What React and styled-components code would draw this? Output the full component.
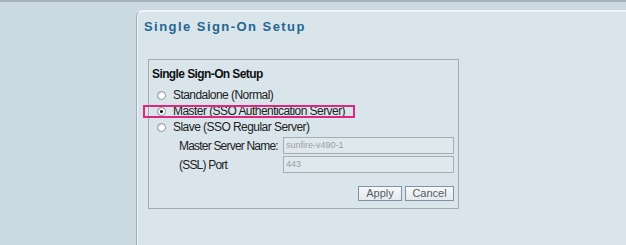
import React from "react";
import styled, { createGlobalStyle } from "styled-components";

const Global = createGlobalStyle`
  html, body { margin: 0; padding: 0; }
  body { font-family: "Liberation Sans", Arial, sans-serif; background: #cbdae2; }
`;

const Page = styled.div`
  display: flex;
  width: 626px;
  height: 245px;
  box-sizing: border-box;
  border-top: 2px solid #a9b2b7;
  background: #cbdae2;
  overflow: hidden;
`;

const Sidebar = styled.div`
  width: 136px;
  flex: none;
`;

const Panel = styled.div`
  flex: 1;
  margin-top: 8px;
  border-top: 1px solid #eef3f6;
  border-left: 1px solid #a3afb5;
  border-top-left-radius: 7px;
  background: #d9e5eb;
  padding: 8px 0 0 7px;
  box-shadow: inset 1px 1px 0 #eef4f7;
`;

const Title = styled.h1`
  margin: 0;
  font-size: 13px;
  line-height: 16px;
  font-weight: bold;
  letter-spacing: 1.45px;
  color: #24668f;
`;

const Fieldset = styled.div`
  margin: 24px 0 0 4px;
  width: 311px;
  height: 150px;
  box-sizing: border-box;
  border: 1px solid #a2abb0;
  padding: 7px 4px 0 3px;
  display: flex;
  flex-direction: column;
`;

const Heading = styled.div`
  font-size: 12px;
  line-height: 15px;
  font-weight: bold;
  letter-spacing: -0.6px;
  color: #111;
  margin-bottom: 5px;
`;

const RadioRow = styled.div`
  position: relative;
  display: flex;
  align-items: center;
  height: 16px;
  padding-left: 5px;
  font-size: 12px;
  letter-spacing: -0.55px;
  color: #222;
  white-space: nowrap;
`;

const Highlight = styled.div`
  position: absolute;
  left: -9px;
  top: 2px;
  width: 212px;
  height: 13px;
  border: 2px solid #e0267f;
  box-sizing: border-box;
  pointer-events: none;
`;

const Radio = styled.span`
  width: 9px;
  height: 9px;
  border-radius: 50%;
  box-sizing: border-box;
  border: 1px solid #8d969b;
  background: radial-gradient(circle at 65% 60%, #ffffff 40%, #cdd3d7 100%);
  margin-right: 7px;
  display: flex;
  align-items: center;
  justify-content: center;
  &::after {
    content: "";
    display: ${(p) => (p.$checked ? "block" : "none")};
    width: 3px;
    height: 3px;
    border-radius: 50%;
    background: #000;
  }
`;

const FieldRow = styled.div`
  display: flex;
  align-items: center;
  padding-left: 27px;
  margin-top: ${(p) => p.$mt || 0}px;
  font-size: 12px;
  letter-spacing: -0.8px;
  color: #222;
  white-space: nowrap;
`;

const Label = styled.span`
  width: 104px;
  flex: none;
`;

const Input = styled.div`
  flex: 1;
  height: 17px;
  box-sizing: border-box;
  border: 1px solid #a6aeb2;
  background: #dfe8ed;
  font-size: 9px;
  letter-spacing: 0;
  line-height: 15px;
  color: #9a9fa3;
  padding-left: 2px;
`;

const Buttons = styled.div`
  display: flex;
  justify-content: flex-end;
  gap: 3px;
  margin-top: 13px;
`;

const Button = styled.button`
  width: ${(p) => p.$w}px;
  height: 15px;
  padding: 0;
  box-sizing: border-box;
  border: 1px solid #7f93a6;
  background: linear-gradient(#f7f9fa, #e3e9ed);
  font-family: "Liberation Sans", Arial, sans-serif;
  font-size: 11px;
  line-height: 13px;
  color: #555b60;
`;

export default function App() {
  return (
    <>
      <Global />
      <Page>
        <Sidebar />
        <Panel>
          <Title>Single Sign-On Setup</Title>
          <Fieldset>
            <Heading>Single Sign-On Setup</Heading>
            <RadioRow>
              <Radio />
              Standalone (Normal)
            </RadioRow>
            <RadioRow>
              <Highlight />
              <Radio $checked />
              Master (SSO Authentication Server)
            </RadioRow>
            <RadioRow>
              <Radio />
              Slave (SSO Regular Server)
            </RadioRow>
            <FieldRow $mt={2}>
              <Label>Master Server Name:</Label>
              <Input>sunfire-v490-1</Input>
            </FieldRow>
            <FieldRow $mt={2}>
              <Label>(SSL) Port</Label>
              <Input>443</Input>
            </FieldRow>
            <Buttons>
              <Button $w={44}>Apply</Button>
              <Button $w={49}>Cancel</Button>
            </Buttons>
          </Fieldset>
        </Panel>
      </Page>
    </>
  );
}
